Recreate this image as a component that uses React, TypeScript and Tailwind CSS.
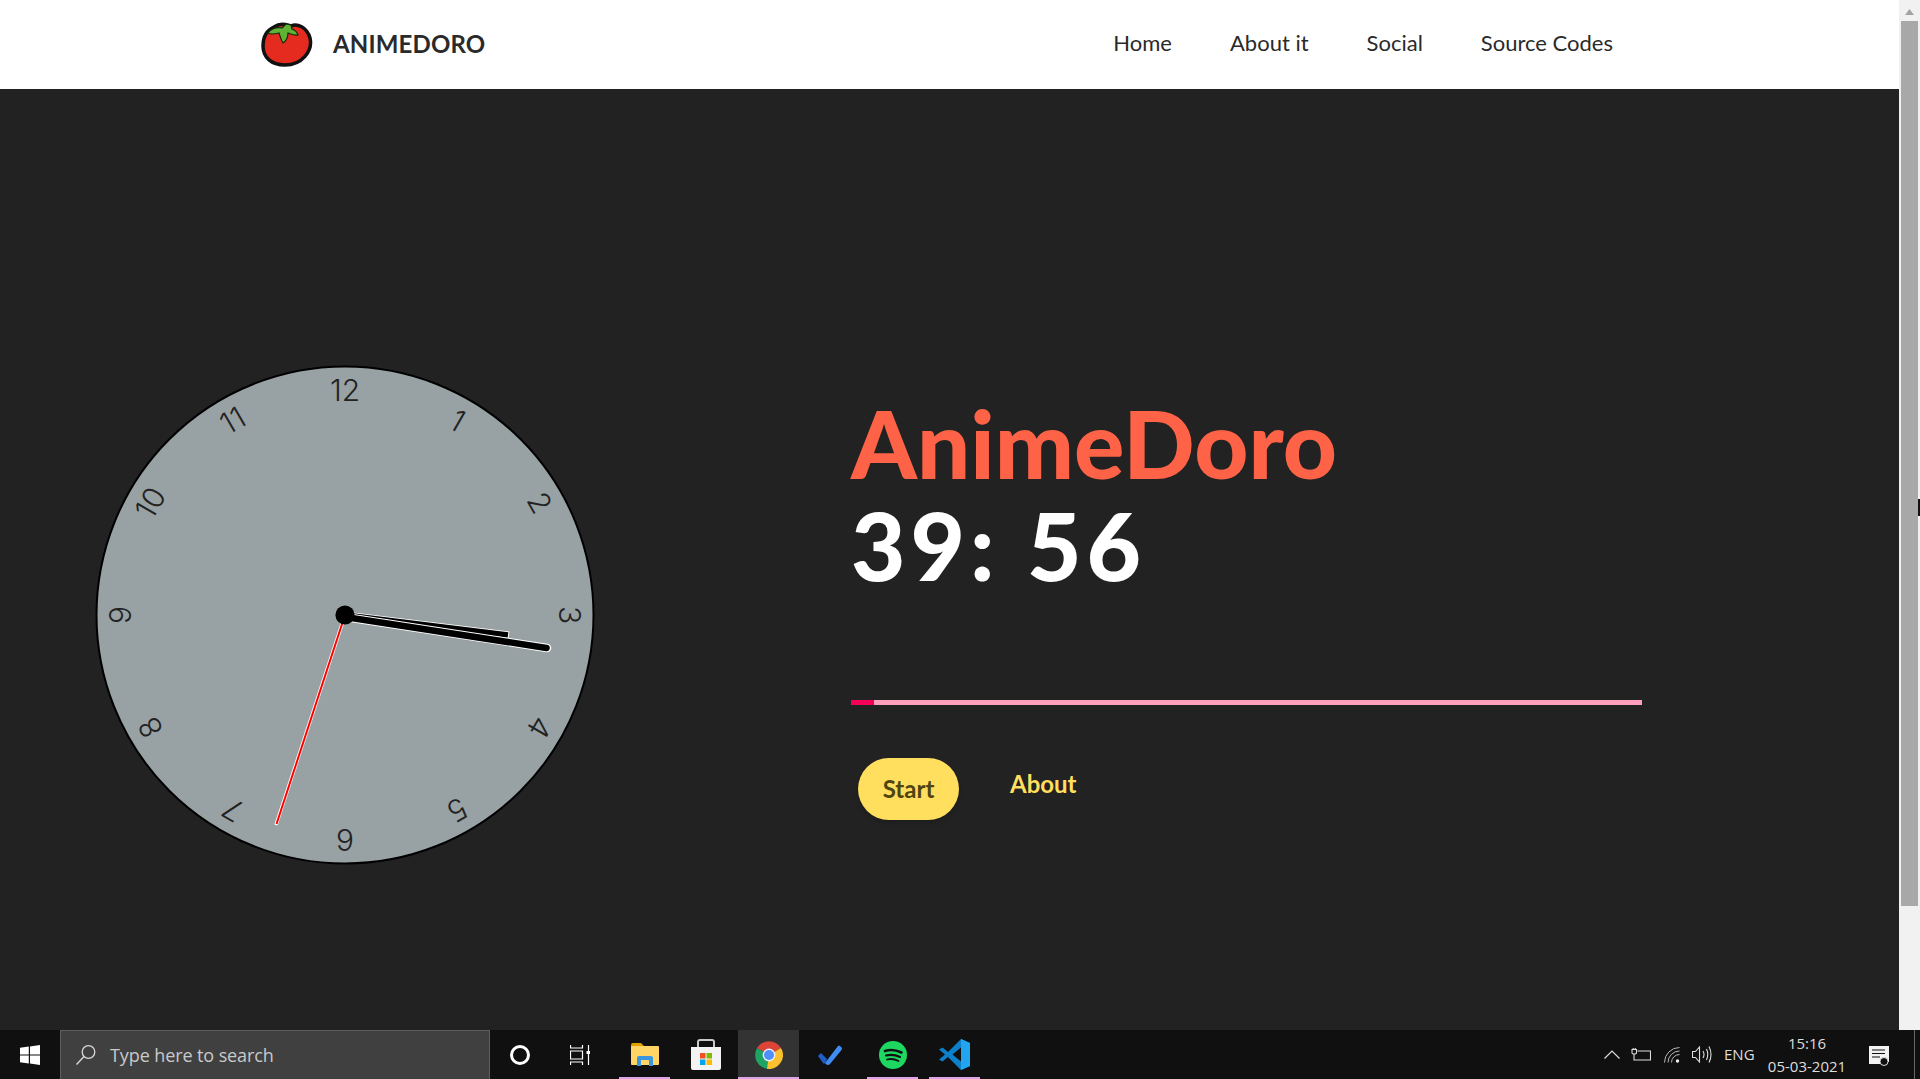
const jost = "font-['Lato',sans-serif]";
const segoe = "font-['Open_Sans',sans-serif]";

const navLinks = ["Home", "About it", "Social", "Source Codes"];

const TomatoLogo = () => (
  <svg width="52" height="46" viewBox="0 0 52 46">
    <path
      d="M13 6 C20 1 26 4 30 5 C36 2 46 6 49 17 C52 30 41 44 24 44 C10 44 2 36 2 25 C2 16 6 9 13 6 Z"
      fill="#e52b20"
      stroke="#111"
      strokeWidth="3.5"
    />
    <path
      d="M7 12 C10 8 15 6 21 7 L25 3 L30 4 L31 8 C34 9 36 11 37 14 C33 15 30 13 27 12 C27 16 25 20 22 22 C20 19 19 15 18 12 C14 13 10 14 7 12 Z"
      fill="#5fb233"
      stroke="#0f2a0a"
      strokeWidth="1.2"
    />
  </svg>
);

const Header = () => (
  <header className="h-[89px] bg-white flex items-center justify-between pl-[261px] pr-[286px] pb-[2px]">
    <div className="flex items-center gap-[20px]">
      <TomatoLogo />
      <span className={`${jost} text-[24px] font-bold tracking-[0.15px] text-[#2a2a2a]`}>ANIMEDORO</span>
    </div>
    <nav className="flex gap-[58px] mb-[3px]">
      {navLinks.map((link) => (
        <a key={link} className={`${jost} text-[22px] text-[#2a2a2a]`}>
          {link}
        </a>
      ))}
    </nav>
  </header>
);

const clockNumbers = [12, 1, 2, 3, 4, 5, 6, 7, 8, 9, 10, 11];

const Clock = () => (
  <svg width="500" height="500" viewBox="0 0 500 500" className="shrink-0">
    <circle cx="250" cy="250" r="248.5" fill="#98a2a5" stroke="#000" strokeWidth="2" />
    {clockNumbers.map((n, i) => (
      <text
        key={n}
        x="250"
        y="36"
        textAnchor="middle"
        transform={`rotate(${i * 30} 250 250)`}
        fontFamily="Inter, sans-serif"
        fontSize="30"
        fontWeight="300"
        fill="#222"
      >
        {n}
      </text>
    ))}
    {/* hour hand */}
    <line x1="250" y1="250" x2="414" y2="270" stroke="#fff" strokeWidth="7" />
    <line x1="250" y1="250" x2="413" y2="270" stroke="#000" strokeWidth="5.5" />
    {/* minute hand */}
    <line x1="250" y1="252" x2="452" y2="283" stroke="#fff" strokeWidth="8.5" strokeLinecap="round" />
    <line x1="250" y1="252" x2="451.5" y2="283" stroke="#000" strokeWidth="6.5" strokeLinecap="round" />
    {/* second hand */}
    <line x1="250" y1="250" x2="181" y2="460" stroke="#fff" strokeWidth="3.5" />
    <line x1="250" y1="250" x2="181.5" y2="459" stroke="#f00" strokeWidth="2" />
    <circle cx="250" cy="250" r="9.6" fill="#000" />
  </svg>
);

const Pomodoro = () => (
  <div className="ml-[256px] w-[791px] pt-[27px]">
    <h1 className={`${jost} text-[94px] leading-[102px] font-black text-[#ff6347]`}>AnimeDoro</h1>
    <div className={`${jost} text-[94px] leading-[102px] font-black tracking-[5px] text-white`}>39: 56</div>
    <div className="mt-[104px] h-[5px] bg-[#ff9fbe]">
      <div className="h-full w-[23px] bg-[#f50057]" />
    </div>
    <div className="mt-[53px] ml-[7px] flex items-start gap-[51px]">
      <button className={`${jost} w-[101px] h-[62px] rounded-[31px] bg-[#ffdf5d] text-[24px] font-bold text-[#4f4412] shadow-md`}>
        Start
      </button>
      <a className={`${jost} mt-[8px] text-[24px] font-bold text-[#ffdf5d]`}>About</a>
    </div>
  </div>
);

const Scrollbar = () => (
  <div className="relative w-[21px] bg-[#f1f1f1] px-[2px] flex flex-col items-center">
    <svg width="9" height="6" viewBox="0 0 9 6" className="mt-[9px] mb-[6px]">
      <path d="M4.5 0 L9 6 H0 Z" fill="#a3a3a3" />
    </svg>
    <div className="w-[17px] h-[885px] bg-[#a8a8a8]" />
    <div className="absolute right-0 top-[499px] w-[2px] h-[17px] bg-[#111]" />
  </div>
);

const TaskIcon = ({ children, active, open, w = 51, ml = 0 }: { children: React.ReactNode; active?: boolean; open?: boolean; w?: number; ml?: number }) => (
  <div
    className={`relative h-full flex items-center justify-center ${active ? "bg-[#333333]" : ""}`}
    style={{ width: w, marginLeft: ml }}
  >
    {children}
    {open && <div className="absolute bottom-0 left-0 right-0 h-[2px] bg-[#dfa3e8]" />}
  </div>
);

const Taskbar = () => (
  <footer className={`${segoe} h-[49px] bg-[#101010] flex items-center text-[#dddddd]`}>
    <div className="w-[60px] h-full flex items-center justify-center">
      <svg width="20" height="20" viewBox="0 0 20 20" fill="#fff">
        <path d="M0 2.8 L8.8 1.6 V9.4 H0 Z M10 1.4 L20 0 V9.4 H10 Z M0 10.6 H8.8 V18.4 L0 17.2 Z M10 10.6 H20 V20 L10 18.6 Z" />
      </svg>
    </div>
    <div className="w-[430px] h-full bg-[#404040] border border-b-0 border-[#5e5e5e] flex items-center pl-[14px] gap-[13px]">
      <svg width="22" height="22" viewBox="0 0 22 22" fill="none" stroke="#d8d8d8" strokeWidth="1.3">
        <circle cx="13.5" cy="8" r="6.3" />
        <path d="M9 12.5 L1.5 20.5" />
      </svg>
      <span className="text-[18px] tracking-[-0.1px] text-[#c9c9c9]">Type here to search</span>
    </div>
    <div className="w-[60px] h-full flex items-center justify-center">
      <div className="w-[20px] h-[20px] rounded-full border-[3px] border-white" />
    </div>
    <div className="w-[60px] h-full flex items-center justify-center">
      <svg width="20" height="20" viewBox="0 0 20 20" fill="none" stroke="#fff" strokeWidth="1.2">
        <path d="M0.5 0 V3 H12.5 V0 M0.5 6 H12.5 V14 H0.5 Z M0.5 20 V17 H12.5 V20 M18.5 0 V6 M18.5 9 V20" />
        <rect x="16.5" y="6" width="3.5" height="3" fill="#fff" stroke="none" />
      </svg>
    </div>
    <TaskIcon open ml={9}>
      <svg width="28" height="24" viewBox="0 0 28 24">
        <path d="M0 2 Q0 0 2 0 H10 L13 3 H12 L10 5 H0 Z" fill="#e0a100" />
        <rect x="0" y="3" width="28" height="19" rx="1" fill="#ffd666" />
        <path d="M6 23 V15 Q6 13 8 13 H20 Q22 13 22 15 V23 H18 V17 H10 V23 Z" fill="#3a96dd" />
      </svg>
    </TaskIcon>
    <TaskIcon w={51} ml={10}>
      <svg width="30" height="31" viewBox="0 0 30 31">
        <path d="M7 9 V3 Q7 1 9 1 H21 Q23 1 23 3 V9" fill="none" stroke="#c9c9c9" strokeWidth="2" />
        <path d="M0 8 H30 V29 Q30 31 28 31 H2 Q0 31 0 29 Z" fill="#f3f3f3" />
        <rect x="9" y="14" width="5.5" height="5.5" fill="#f25022" />
        <rect x="15.5" y="14" width="5.5" height="5.5" fill="#7fba00" />
        <rect x="9" y="20.5" width="5.5" height="5.5" fill="#00a4ef" />
        <rect x="15.5" y="20.5" width="5.5" height="5.5" fill="#ffb900" />
      </svg>
    </TaskIcon>
    <TaskIcon active open w={61} ml={7}>
      <svg width="28" height="28" viewBox="0 0 28 28">
        <path d="M14 14 L2 7 A14 14 0 0 1 26 7 Z" fill="#db4437" />
        <path d="M14 14 L2 7 A14 14 0 0 0 14 28 Z" fill="#1ea362" />
        <path d="M14 14 L26 7 A14 14 0 0 1 12 27.9 Z" fill="#fbc02d" />
        <circle cx="14" cy="14" r="6.4" fill="#e8eefc" />
        <circle cx="14" cy="14" r="5" fill="#4f8ff7" />
      </svg>
    </TaskIcon>
    <TaskIcon w={62}>
      <svg width="24" height="20" viewBox="0 0 24 20">
        <path d="M0 11 L3 8 L9 14 L7 18 Q6 19 5 18 Z" fill="#1f5fc4" />
        <path d="M7 18 L20 1 Q21 0 22 1 L24 3 Q24 4 23.5 5 L12 19 Q11 20 10 20 Q8 20 7 18 Z" fill="#3f8cf2" />
      </svg>
    </TaskIcon>
    <TaskIcon open w={51} ml={6}>
      <svg width="28" height="28" viewBox="0 0 28 28" fill="none">
        <circle cx="14" cy="14" r="14" fill="#1ed760" />
        <path d="M6 10 Q14 7.5 22.5 11.5" stroke="#101010" strokeWidth="2.6" strokeLinecap="round" />
        <path d="M7 14.5 Q14 12.5 21 16" stroke="#101010" strokeWidth="2.2" strokeLinecap="round" />
        <path d="M8 18.5 Q14 17 19.5 20" stroke="#101010" strokeWidth="1.8" strokeLinecap="round" />
      </svg>
    </TaskIcon>
    <TaskIcon open w={51} ml={11}>
      <svg width="31" height="31" viewBox="0 0 31 31">
        <path d="M22 0 L31 4 V27 L22 31 L9 18 L3.5 22.5 L0 20.5 L6 15.5 L0 10.5 L3.5 8.5 L9 13 Z M22 8.5 L13.5 15.5 L22 22.5 Z" fill="#0e7fc9" fillRule="evenodd" />
        <path d="M22 0 L31 4 V27 L22 31 Z" fill="#22a5ee" />
      </svg>
    </TaskIcon>

    <div className="ml-auto h-full flex items-center">
      <svg width="16" height="9" viewBox="0 0 16 9" fill="none" stroke="#dddddd" strokeWidth="1.2">
        <path d="M0.5 8.5 L8 1 L15.5 8.5" />
      </svg>
      <svg width="20" height="13" viewBox="0 0 20 13" fill="none" stroke="#dddddd" strokeWidth="1.1" className="ml-[11px]">
        <path d="M3 6 V12 H19.5 V3 H6.5 M1 1.5 H5.5 V4.5 Q5.5 6 3.25 6 Q1 6 1 4.5 Z M2.2 0 V1.5 M4.3 0 V1.5" />
      </svg>
      <svg width="17" height="16" viewBox="0 0 17 16" fill="none" stroke="#b8b8b8" strokeWidth="1" className="ml-[13px]">
        <path d="M0.5 15.5 A15 15 0 0 1 15.5 0.5 M4 15.5 A11.5 11.5 0 0 1 15.5 4 M7.5 15.5 A8 8 0 0 1 15.5 7.5" />
        <circle cx="13.5" cy="14" r="1.7" fill="#eeeeee" stroke="none" />
      </svg>
      <svg width="20" height="17" viewBox="0 0 20 17" fill="none" stroke="#dddddd" strokeWidth="1.1" className="ml-[11px]">
        <path d="M0.5 5.5 H3.5 L7.5 1 V16 L3.5 11.5 H0.5 Z M11 5 Q13 8.5 11 12 M14.5 3 Q17 8.5 14.5 14 M17 0.5 Q21 8.5 17 16.5" />
      </svg>
      <span className="ml-[12px] text-[15px] w-[32px]">ENG</span>
      <div className="ml-[11px] w-[80px] flex flex-col items-center text-[15px] leading-[23px]">
        <span>15:16</span>
        <span>05-03-2021</span>
      </div>
      <div className="ml-[22px] relative w-[20px] h-[18px]">
        <svg width="20" height="20" viewBox="0 0 20 20">
          <path d="M0 0 H20 V16 H14 L12 18 H0 Z" fill="#f2f2f2" />
          <path d="M3 4 H16 M3 7.5 H16 M3 11 H11" stroke="#101010" strokeWidth="1.2" />
          <circle cx="15" cy="15.5" r="4" fill="#101010" stroke="#dddddd" strokeWidth="1" />
        </svg>
      </div>
      <div className="ml-[25px] mr-[5px] w-px h-full bg-[#666666]" />
    </div>
  </footer>
);

export default function App() {
  return (
    <div className="h-screen flex flex-col overflow-hidden">
      <div className="flex-1 min-h-0 flex">
        <div className="flex-1 bg-[#222222]">
          <Header />
          <main className="flex items-start pl-[95px] pt-[276px]">
            <Clock />
            <Pomodoro />
          </main>
        </div>
        <Scrollbar />
      </div>
      <Taskbar />
    </div>
  );
}
